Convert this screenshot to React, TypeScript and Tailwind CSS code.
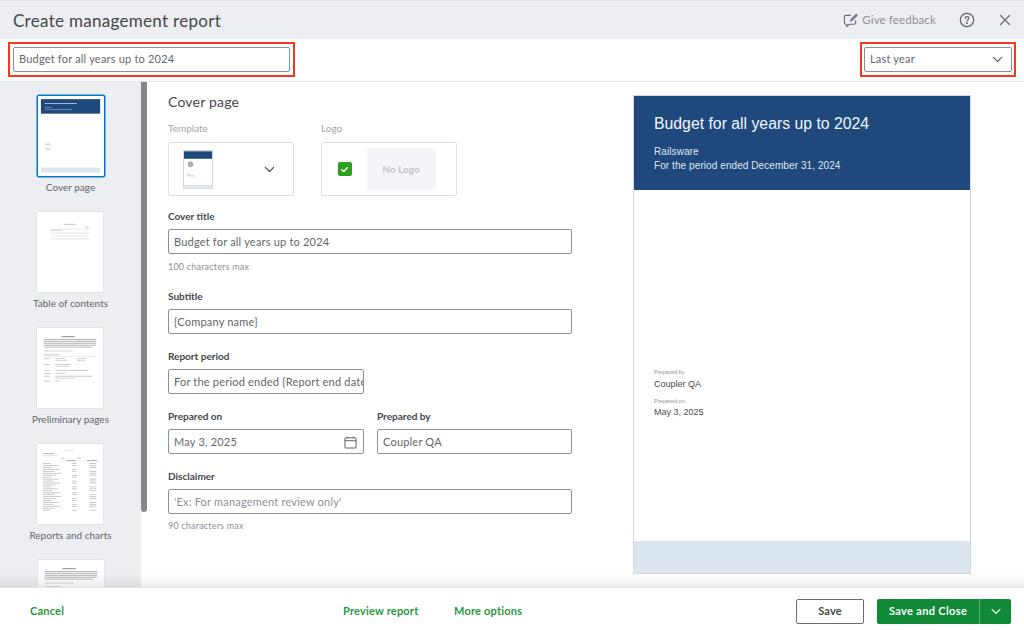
import React from "react";

const font = { fontFamily: "Lato, 'Noto Sans', sans-serif" };

function Lines({ rows }: { rows: [number, number, number, number, string?][] }) {
  return (
    <svg viewBox="0 0 68 82" className="w-full h-full block opacity-70">
      {rows.map((r, i) => (
        <rect key={i} x={r[0]} y={r[1]} width={r[2]} height={r[3]} fill={r[4] || "#9a9da1"} />
      ))}
    </svg>
  );
}

function Cover() {
  return (
    <svg viewBox="0 0 68 82" className="w-full h-full block">
      <rect x="3" y="3" width="61" height="15" fill="#1f497d" />
      <rect x="7" y="7" width="33" height="1" fill="#a9bdd4" />
      <rect x="7" y="11" width="7" height="0.8" fill="#7f9abb" />
      <rect x="7" y="13.5" width="28" height="0.8" fill="#7f9abb" />
      <rect x="7" y="47" width="5" height="0.7" fill="#dcdcdc" />
      <rect x="7" y="49" width="6" height="0.8" fill="#bbb" />
      <rect x="7" y="52" width="5" height="0.7" fill="#dcdcdc" />
      <rect x="7" y="54" width="6" height="0.8" fill="#bbb" />
      <rect x="3" y="73.5" width="61" height="5" fill="#dce6f1" />
    </svg>
  );
}

const toc: [number, number, number, number, string?][] = [
  [28, 12, 12, 1, "#aaa"],
  [50, 15, 3, 1, "#aaa"],
  [14, 17, 40, 0.8, "#ddd"],
  [14, 18, 12, 1, "#bbb"],
  [14, 21, 40, 1, "#ddd"],
  [14, 24, 38, 1, "#ddd"],
  [14, 27, 40, 1, "#ddd"],
];

const prelim: [number, number, number, number, string?][] = [
  [25, 8, 14, 1.2, "#777"],
  [7, 11, 54, 1.1, "#999"],
  [7, 13, 54, 1.1, "#999"],
  [7, 15, 54, 1.1, "#999"],
  [7, 17, 54, 1.1, "#999"],
  [7, 19, 50, 1.1, "#aaa"],
  [7, 23, 30, 0.9, "#bbb"],
  [7, 27, 16, 0.9, "#aaa"],
  [7, 29, 54, 0.5, "#ccc"],
  [7, 31, 6, 0.9, "#aaa"],
  [19, 31, 10, 0.9, "#aaa"],
  [41, 31, 10, 0.9, "#aaa"],
  [19, 33, 12, 0.9, "#bbb"],
  [41, 33, 9, 0.9, "#bbb"],
  [7, 37, 6, 0.9, "#aaa"],
  [19, 37, 16, 0.9, "#aaa"],
  [19, 39, 14, 0.9, "#bbb"],
  [7, 43, 6, 0.9, "#aaa"],
  [19, 43, 34, 0.9, "#aaa"],
  [7, 46, 8, 0.9, "#aaa"],
  [19, 46, 10, 0.9, "#aaa"],
  [7, 49, 6, 0.9, "#aaa"],
  [19, 49, 38, 0.9, "#aaa"],
  [19, 51, 20, 0.9, "#bbb"],
  [7, 54, 6, 0.9, "#aaa"],
  [19, 54, 4, 0.9, "#aaa"],
];

const reportRows: [number, number, number, number, string?][] = (() => {
  const out: [number, number, number, number, string?][] = [
    [30, 6, 8, 0.7, "#ccc"],
    [6, 9, 12, 1.2, "#8aa6c4"],
    [6, 11.5, 16, 0.7, "#ccc"],
    [25, 14, 3, 0.9, "#999"],
    [42, 14, 3, 0.9, "#999"],
    [30, 16.5, 10, 0.9, "#777"],
    [51, 16.5, 11, 0.9, "#777"],
  ];
  for (let i = 0; i < 25; i++) {
    const y = 19.5 + i * 2;
    const w = 8 + ((i * 7) % 12);
    out.push([6, y, w, 0.9, "#aaa"]);
    if (i % 3 !== 2) out.push([36, y, 5, 0.9, "#aaa"]);
    if (i % 4 !== 3) out.push([54, y, 7, 0.9, "#aaa"]);
  }
  return out;
})();

function Thumb({ label, selected, children }: { label?: string; selected?: boolean; children: React.ReactNode }) {
  return (
    <div className="flex flex-col items-center shrink-0 h-[116px]">
      <div
        className={
          "w-[68px] h-[82px] bg-white rounded-[2px] overflow-hidden shrink-0 " +
          (selected ? "border border-[#0077c5] shadow-[0_0_0_0.5px_#0077c5]" : "border border-[#e3e5e8]")
        }
      >
        {children}
      </div>
      {label && <div className="mt-[3px] text-[10px] leading-[14px] text-[#63666a] whitespace-nowrap">{label}</div>}
    </div>
  );
}

function Field({ label, value, w, muted, icon, tight }: { label: string; value: string; w: string; muted?: boolean; icon?: React.ReactNode; tight?: boolean }) {
  return (
    <div className={"flex flex-col " + w}>
      <div className="text-[10px] leading-[13px] font-bold text-[#44474b] mb-[6px] h-[13px]">{label}</div>
      <InputBox value={value} muted={muted} icon={icon} tight={tight} />
    </div>
  );
}

function InputBox({ value, muted, icon, tight }: { value: string; muted?: boolean; icon?: React.ReactNode; tight?: boolean }) {
  return (
    <div className={"h-[25px] w-full rounded-[2px] border border-[#8d9096] bg-white flex items-center pl-[5px] pt-[1px] overflow-hidden " + (tight ? "pr-0" : "pr-[6px]")}>
      <span className={"flex-1 overflow-hidden whitespace-nowrap text-[11px] tracking-[0.2px] " + (muted ? "text-[#8d9096]" : "text-[#63666a]")}>{value}</span>
      {icon}
    </div>
  );
}

function Chevron({ className }: { className?: string }) {
  return (
    <svg viewBox="0 0 12 8" className={className} fill="none" stroke="currentColor" strokeWidth="1.3" strokeLinecap="round" strokeLinejoin="round">
      <path d="M1.2 1.5 6 6.3l4.8-4.8" />
    </svg>
  );
}

export default function App() {
  return (
    <div className="w-[1024px] h-[630px] flex flex-col bg-white overflow-hidden" style={font}>
      <header className="h-[39px] shrink-0 bg-[#eceef1] flex items-center pl-[13px] pr-[13px] border-t border-[#e3e5e8]">
        <h1 className="text-[17px] leading-none text-[#44474b] tracking-[0.3px] font-normal flex-1">Create management report</h1>
        <div className="flex items-center gap-[4px] text-[#8d9096] text-[11.5px] tracking-[0.15px]">
          <svg viewBox="0 0 16 16" className="w-[15px] h-[15px] text-[#6b6c72]" fill="none" stroke="currentColor" strokeWidth="1.2" strokeLinejoin="round" strokeLinecap="round">
            <path d="M8 2.5H3A1.5 1.5 0 0 0 1.5 4v6.5A1.5 1.5 0 0 0 3 12h1v2.5L7 12h5a1.5 1.5 0 0 0 1.5-1.5V8" />
            <path d="M14 1.5 9.5 6 8 8.5 10.5 7 15 2.5z" />
          </svg>
          <span>Give feedback</span>
        </div>
        <svg viewBox="0 0 16 16" className="w-[16px] h-[16px] ml-[23px] text-[#5f6266]" fill="none" stroke="currentColor" strokeWidth="1.2" strokeLinecap="round">
          <circle cx="8" cy="8" r="6.7" />
          <path d="M6.2 6.3C6.2 5.2 7 4.6 8 4.6s1.8.7 1.8 1.6c0 1.4-1.8 1.4-1.8 2.8" />
          <circle cx="8" cy="11.2" r="0.4" fill="currentColor" />
        </svg>
        <svg viewBox="0 0 12 12" className="w-[12px] h-[12px] ml-[24px] text-[#6b6c72]" fill="none" stroke="currentColor" strokeWidth="1.2" strokeLinecap="round">
          <path d="M1.5 1.5l9 9M10.5 1.5l-9 9" />
        </svg>
      </header>

      <div className="h-[43px] shrink-0 bg-white border-b border-[#e3e5e8] flex items-center justify-between pl-[8px] pr-[8px] pb-[1px]">
        <div className="w-[287px] h-[35px] border-2 border-[#f5391c] p-[3px] flex items-center">
          <div className="h-[25px] w-full rounded-[2px] border border-[#8d9096] bg-white flex items-center pl-[5px]">
            <span className="text-[11px] tracking-[0.2px] text-[#63666a]">Budget for all years up to 2024</span>
          </div>
        </div>
        <div className="w-[156px] h-[35px] border-2 border-[#f5391c] p-[2px] flex items-center">
          <div className="h-[25px] w-full rounded-[2px] border border-[#8d9096] bg-white flex items-center pl-[5px] pr-[8px] justify-between">
            <span className="text-[11px] tracking-[0.2px] text-[#63666a]">Last year</span>
            <Chevron className="w-[11px] h-[7px] text-[#63666a]" />
          </div>
        </div>
      </div>

      <main className="flex-1 min-h-0 flex relative">
        <aside className="w-[141px] shrink-0 bg-[#eceef1] flex flex-col items-center pt-[13px] overflow-hidden">
          <Thumb label="Cover page" selected><Cover /></Thumb>
          <Thumb label="Table of contents"><Lines rows={toc} /></Thumb>
          <Thumb label="Preliminary pages"><Lines rows={prelim} /></Thumb>
          <Thumb label="Reports and charts"><Lines rows={reportRows} /></Thumb>
          <Thumb><Lines rows={prelim} /></Thumb>
        </aside>
        <div className="w-[6px] shrink-0 bg-white">
          <div className="h-[430px] bg-[#85878a] rounded-b-[3px]"></div>
        </div>

        <section className="flex-1 flex min-w-0 pl-[21px]">
          <div className="w-[404px] shrink-0 pt-[11px] flex flex-col">
            <h2 className="text-[14px] leading-[17px] text-[#44474b] font-normal tracking-[0.2px]">Cover page</h2>
            <div className="flex mt-[12px] gap-[27px]">
              <div className="w-[126px]">
                <div className="text-[10px] leading-[13px] text-[#a3a6aa] mb-[7px]">Template</div>
                <div className="h-[54px] rounded-[2px] border-[1.5px] border-[#dcdfe3] flex items-center pl-[14px] pr-[18px] justify-between">
                  <div className="w-[30px] h-[39px] border border-[#d4d7dc] bg-white">
                    <svg viewBox="0 0 30 39" className="w-full h-full block">
                      <rect width="30" height="8" fill="#1f497d" />
                      <circle cx="7" cy="14" r="3" fill="#a9abae" />
                      <rect x="3" y="24" width="4" height="0.7" fill="#aaa" />
                      <rect x="3" y="26" width="8" height="0.7" fill="#aaa" />
                      <rect y="36" width="30" height="3" fill="#dce6f1" />
                    </svg>
                  </div>
                  <Chevron className="w-[11px] h-[7px] text-[#44474b]" />
                </div>
              </div>
              <div className="w-[136px]">
                <div className="text-[10px] leading-[13px] text-[#a3a6aa] mb-[7px]">Logo</div>
                <div className="h-[54px] rounded-[2px] border-[1.5px] border-[#dcdfe3] flex items-center pl-[15.5px] gap-[15px]">
                  <div className="w-[14px] h-[14px] rounded-[2px] bg-[#2ca01c] flex items-center justify-center">
                    <svg viewBox="0 0 10 10" className="w-[9px] h-[9px]" fill="none" stroke="#fff" strokeWidth="1.6" strokeLinecap="round" strokeLinejoin="round">
                      <path d="M2 5.2 4.2 7.2 8 3" />
                    </svg>
                  </div>
                  <div className="w-[69px] h-[42px] bg-[#f4f5f8] flex items-center justify-center text-[10px] font-bold text-[#c4c6ca]">No Logo</div>
                </div>
              </div>
            </div>
            <div className="mt-[14px]"><Field label="Cover title" value="Budget for all years up to 2024" w="w-full" /></div>
            <div className="text-[9px] leading-[12px] text-[#8d9096] mt-[7px] tracking-[0.2px]">100 characters max</div>
            <div className="mt-[17px]"><Field label="Subtitle" value="{Company name}" w="w-full" /></div>
            <div className="mt-[16px]"><Field label="Report period" value="For the period ended {Report end date}" w="w-[196px]" tight /></div>
            <div className="mt-[16px] flex gap-[13px]">
              <Field
                label="Prepared on"
                value="May 3, 2025"
                w="w-[196px]"
                icon={
                  <svg viewBox="0 0 14 14" className="w-[13px] h-[13px] text-[#5f6266]" fill="none" stroke="currentColor" strokeWidth="1.1">
                    <rect x="1" y="2" width="12" height="11" rx="1.5" />
                    <path d="M1 5h12" />
                    <path d="M4 .8v1.6M10 .8v1.6" />
                  </svg>
                }
              />
              <Field label="Prepared by" value="Coupler QA" w="w-[195px]" />
            </div>
            <div className="mt-[16px]"><Field label="Disclaimer" value="'Ex: For management review only'" w="w-full" muted /></div>
            <div className="text-[9px] leading-[12px] text-[#8d9096] mt-[6px] tracking-[0.2px]">90 characters max</div>
          </div>

          <div className="ml-[61px] mt-[13px] w-[338px] h-[479px] border border-[#d4d7dc] flex flex-col" style={{ fontFamily: "'Liberation Sans', Arial, sans-serif" }}>
            <div className="h-[94px] shrink-0 bg-[#1f497d] pl-[20px] pt-[18px] text-white">
              <div className="text-[15.8px] leading-[20px] text-[#f2f5f9]">Budget for all years up to 2024</div>
              <div className="text-[10px] leading-[14px] mt-[11px] text-[#dfe6ef] tracking-[0.08px]">Railsware</div>
              <div className="text-[10px] leading-[14px] text-[#dfe6ef] tracking-[0.08px]">For the period ended December 31, 2024</div>
            </div>
            <div className="flex-1 pl-[20px] pt-[179px] text-[#4a4a4a]">
              <div className="text-[5.6px] leading-[7px] text-[#8d9096]">Prepared by</div>
              <div className="text-[9px] leading-[13px] mt-[2px]">Coupler QA</div>
              <div className="text-[5.6px] leading-[7px] text-[#8d9096] mt-[7px]">Prepared on</div>
              <div className="text-[9px] leading-[13px] mt-[1px]">May 3, 2025</div>
            </div>
            <div className="h-[32px] shrink-0 bg-[#dce6f1]"></div>
          </div>
        </section>

        <div className="absolute left-0 right-0 bottom-0 h-[14px] pointer-events-none bg-gradient-to-b from-transparent to-[#00000012]"></div>
      </main>

      <footer className="h-[43px] shrink-0 bg-white border-t border-[#e3e5e8] flex items-center pl-[30px] pr-[13px] pt-[4px] text-[11px] font-bold tracking-[0.2px] text-[#259a3a]">
        <span className="w-[313px]">Cancel</span>
        <span className="w-[111px]">Preview report</span>
        <span>More options</span>
        <div className="ml-auto flex items-center gap-[13px]">
          <div className="w-[68px] h-[25px] rounded-[2px] border border-[#6b6c72] flex items-center justify-center text-[#44474b]">Save</div>
          <div className="w-[134px] h-[25px] rounded-[2px] bg-[#108a36] flex items-center text-white tracking-[0.35px]">
            <div className="w-[103px] h-full flex items-center justify-center border-r border-[#5fb07a]">Save and Close</div>
            <div className="flex-1 flex items-center justify-center"><Chevron className="w-[10px] h-[7px] text-white" /></div>
          </div>
        </div>
      </footer>
    </div>
  );
}
